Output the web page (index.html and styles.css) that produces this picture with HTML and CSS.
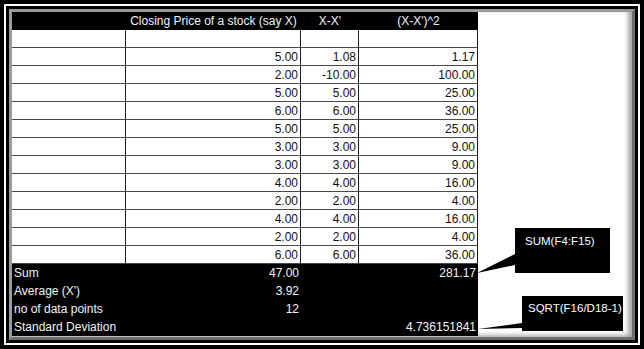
FILE: index.html
```html
<!DOCTYPE html>
<html>
<head>
<meta charset="utf-8">
<link rel="stylesheet" href="styles.css">
</head>
<body>
<div class="frame">
  <div class="mat">
    <div class="panel">
      <div class="sheet">
        <div class="row head">
          <div class="c"></div>
          <div class="c ctr">Closing Price of a stock (say X)</div>
          <div class="c ctr">X-X'</div>
          <div class="c ctr">(X-X')^2</div>
        </div>
        <div class="row data"><div class="c"></div><div class="c"></div><div class="c"></div><div class="c"></div></div>
        <div class="row data"><div class="c"></div><div class="c num">5.00</div><div class="c num">1.08</div><div class="c num">1.17</div></div>
        <div class="row data"><div class="c"></div><div class="c num">2.00</div><div class="c num">-10.00</div><div class="c num">100.00</div></div>
        <div class="row data"><div class="c"></div><div class="c num">5.00</div><div class="c num">5.00</div><div class="c num">25.00</div></div>
        <div class="row data"><div class="c"></div><div class="c num">6.00</div><div class="c num">6.00</div><div class="c num">36.00</div></div>
        <div class="row data"><div class="c"></div><div class="c num">5.00</div><div class="c num">5.00</div><div class="c num">25.00</div></div>
        <div class="row data"><div class="c"></div><div class="c num">3.00</div><div class="c num">3.00</div><div class="c num">9.00</div></div>
        <div class="row data"><div class="c"></div><div class="c num">3.00</div><div class="c num">3.00</div><div class="c num">9.00</div></div>
        <div class="row data"><div class="c"></div><div class="c num">4.00</div><div class="c num">4.00</div><div class="c num">16.00</div></div>
        <div class="row data"><div class="c"></div><div class="c num">2.00</div><div class="c num">2.00</div><div class="c num">4.00</div></div>
        <div class="row data"><div class="c"></div><div class="c num">4.00</div><div class="c num">4.00</div><div class="c num">16.00</div></div>
        <div class="row data"><div class="c"></div><div class="c num">2.00</div><div class="c num">2.00</div><div class="c num">4.00</div></div>
        <div class="row data"><div class="c"></div><div class="c num">6.00</div><div class="c num">6.00</div><div class="c num">36.00</div></div>
        <div class="row foot"><div class="c lbl">Sum</div><div class="c num">47.00</div><div class="c"></div><div class="c num">281.17</div></div>
        <div class="row foot"><div class="c lbl">Average (X')</div><div class="c num">3.92</div><div class="c"></div><div class="c"></div></div>
        <div class="row foot"><div class="c lbl">no of data points</div><div class="c num">12</div><div class="c"></div><div class="c"></div></div>
        <div class="row foot"><div class="c lbl">Standard Deviation</div><div class="c"></div><div class="c"></div><div class="c num">4.736151841</div></div>
      </div>

      <svg class="pointers" width="620" height="325" viewBox="0 0 620 325">
        <polygon points="465,261 503,242 503,253" fill="#000"/>
        <polygon points="466,317 510,311 510,316" fill="#000"/>
      </svg>
      <div class="callout c1">SUM(F4:F15)</div>
      <div class="callout c2">SQRT(F16/D18-1)</div>
    </div>
  </div>
</div>
</body>
</html>
```

FILE: styles.css
```css
html, body {
  margin: 0;
  padding: 0;
  background: #000;
}
body {
  width: 644px;
  height: 349px;
  overflow: hidden;
  font-family: "Liberation Sans", Arial, sans-serif;
  font-size: 12px;
}
.frame {
  box-sizing: border-box;
  width: 644px;
  height: 349px;
  padding: 4px;
  background: #000;
}
.mat {
  box-sizing: border-box;
  height: 100%;
  border: 2px solid #fff;
  padding: 3px;
  background: #000;
}
.panel {
  position: relative;
  box-sizing: border-box;
  height: 100%;
  border: 3px solid;
  border-color: #9a9a9a #6e6e6e #6e6e6e #9a9a9a;
  background: #fff;
  box-shadow: inset -4px -2px 4px rgba(0,0,0,0.35);
}
.sheet {
  width: 466px;
}
.row {
  display: grid;
  grid-template-columns: 114px 175px 58px 119px;
  height: 18px;
}
.c {
  box-sizing: border-box;
  height: 18px;
  line-height: 18px;
  padding: 0 2px;
  white-space: nowrap;
  overflow: hidden;
}
.head {
  background: #000;
  color: #eef3fb;
}
.ctr { text-align: center; }
.num { text-align: right; }
.data .c {
  border-bottom: 1px solid #4a4a4a;
  border-right: 1px solid #1e1e1e;
  line-height: 19px;
  color: #111;
}
.foot {
  background: #000;
  color: #f2f4f8;
}
.lbl { padding-left: 2px; }
.pointers {
  position: absolute;
  left: 0;
  top: 0;
}
.callout {
  position: absolute;
  background: #000;
  color: #fff;
  font-size: 11.5px;
  white-space: nowrap;
  box-sizing: border-box;
}
.c1 {
  left: 503px;
  top: 216px;
  width: 95px;
  height: 45px;
  padding: 7px 0 0 10px;
}
.c2 {
  left: 510px;
  top: 284px;
  width: 101px;
  height: 35px;
  padding: 6px 0 0 6px;
}
```
